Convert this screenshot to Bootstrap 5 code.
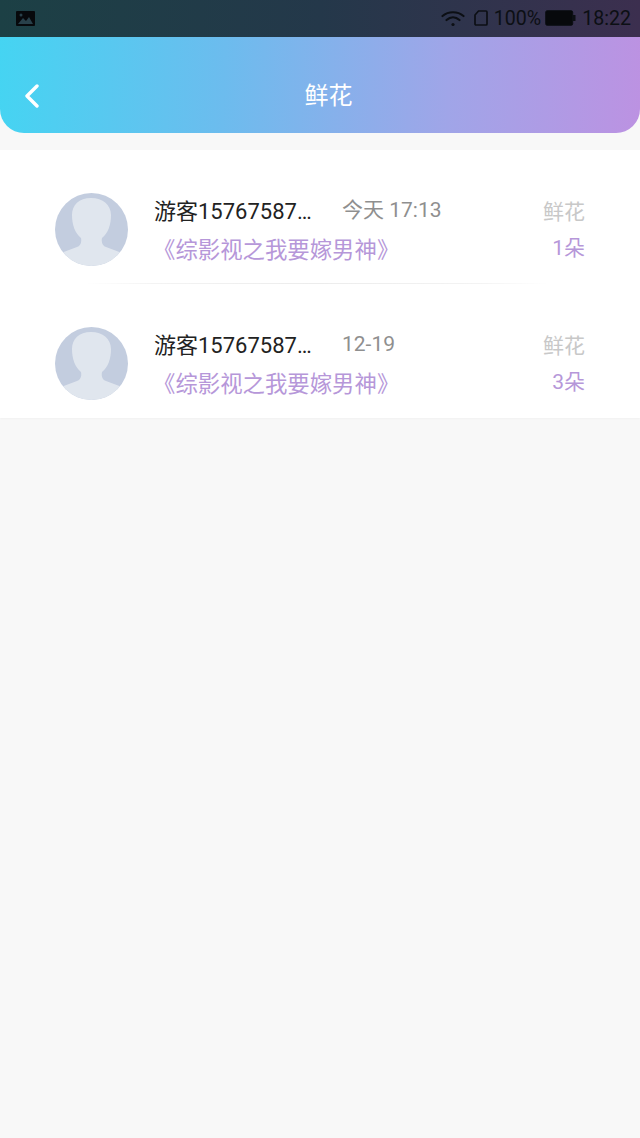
<!DOCTYPE html>
<html lang="zh">
<head>
  <meta charset="UTF-8" />
  <meta name="viewport" content="width=device-width, initial-scale=1.0">
  <title>鲜花</title>
  <link href="https://cdn.jsdelivr.net/npm/bootstrap@5.3.3/dist/css/bootstrap.min.css" rel="stylesheet">
  <script src="https://cdn.jsdelivr.net/npm/bootstrap@5.3.3/dist/js/bootstrap.bundle.min.js"></script>
  <style>
    html, body { height: 100%; }
    body { background: #f8f8f8; font-family: Roboto, "Noto Sans CJK SC", sans-serif; }
    .status-strip { height: 37px; padding: 0 9px 0 16px; background: linear-gradient(90deg, #1c4045 0%, #24384a 50%, #3c2f4f 100%); color: #0c0f14; font-size: 19.6px; }
    .sim-icon { margin-left: 9px; }
    .batt-pct, .clock-text { margin-left: 6px; }
    .batt-icon { margin-left: 4px; }
    .head-bar { height: 96px; padding: 22px 0 0 24px; color: #fff; border-radius: 0 0 24px 24px; background: linear-gradient(92deg, #45d4f2 0%, #6cbcee 35%, #a0a5e8 70%, #bc92e2 100%); }
    .head-title { left: 0; right: 0; top: 22px; bottom: 0; font-size: 24px; padding-left: 17px; }
    .flower-list { margin-top: 17px; background: #fff; box-shadow: 0 1px 2px rgba(0,0,0,.03); }
    .flower-row { height: 134px; padding: 24px 55px 0 55px; }
    .row-rule { left: 85px; right: 92px; bottom: 0; height: 1px; background: linear-gradient(90deg, #fff, #f3f3f3 15%, #ececec 50%, #f3f3f3 85%, #fff); }
    .avatar-disc { width: 73px; height: 73px; border-radius: 50%; overflow: hidden; flex: none; }
    .name-col { margin: 5px 0 0 26px; width: 386px; }
    .top-line { height: 38px; padding-bottom: 3px; }
    .visitor-name { width: 188px; font-size: 22px; color: #222; white-space: nowrap; }
    .visit-time { font-size: 21px; color: #8f8f8f; }
    .book-title { height: 38px; font-size: 22.4px; color: #b697d9; margin-left: -1px; white-space: nowrap; }
    .right-col { margin-top: 4px; text-align: right; }
    .flower-label { height: 36px; font-size: 21px; color: #c8c8c8; }
    .flower-count { height: 36px; font-size: 21px; color: #b697d9; }
  </style>
</head>
<body>
  <div class="status-strip d-flex align-items-center">
    <svg width="19" height="15" viewBox="0 0 19 15"><rect width="19" height="15" rx="1" fill="#07090c"/><path d="M2 13 7 7l3 3 3-4 4 7z" fill="#28404a"/><circle cx="5" cy="4" r="1.5" fill="#28404a"/></svg>
    <div class="ms-auto d-flex align-items-center">
      <svg width="24" height="17" viewBox="0 0 24 17" fill="none" stroke="#0c0f14" stroke-width="2.2" stroke-linecap="round"><path d="M1.5 6C7.5 1 16.5 1 22.5 6"/><path d="M5.5 10C9.5 6.5 14.5 6.5 18.5 10"/><circle cx="12" cy="14.5" r="1.6" fill="#0c0f14" stroke="none"/></svg>
      <svg class="sim-icon" width="14" height="16" viewBox="0 0 14 16" fill="none" stroke="#0c0f14" stroke-width="1.7"><path d="M4.5 1H12a1 1 0 0 1 1 1v12a1 1 0 0 1-1 1H2a1 1 0 0 1-1-1V5z"/></svg>
      <span class="batt-pct">100%</span>
      <svg class="batt-icon" width="31" height="16" viewBox="0 0 31 16"><rect x=".7" y=".7" width="27" height="14.6" rx="1.5" fill="#07090c" stroke="#0c0f14"/><rect x="28" y="5" width="2.5" height="6" fill="#0c0f14"/></svg>
      <span class="clock-text">18:22</span>
    </div>
  </div>

  <div class="head-bar d-flex align-items-center position-relative">
    <svg width="17" height="24" viewBox="0 0 17 24" fill="none" stroke="#fff" stroke-width="3.4" stroke-linecap="round" stroke-linejoin="round"><path d="M13 2 3 12l10 10"/></svg>
    <div class="head-title position-absolute d-flex align-items-center justify-content-center">鲜花</div>
  </div>

  <div class="flower-list">
    <div class="flower-row d-flex align-items-center position-relative">
      <svg class="avatar-disc" viewBox="0 0 73 73"><rect width="73" height="73" fill="#c3cddf"/><path d="M36 5c-12 0-19 7-19 17 0 10 3 18 9 23 1 5-1 8-4 9L6 60c7 8 18 13 30 13s24-5 31-13l-16-6c-3-1-5-4-4-9 6-5 9-13 9-23C56 12 48 5 36 5z" fill="#e0e6ee"/></svg>
      <div class="name-col">
        <div class="top-line d-flex align-items-center"><span class="visitor-name">游客15767587…</span><span class="visit-time">今天 17:13</span></div>
        <div class="book-title d-flex align-items-center">《综影视之我要嫁男神》</div>
      </div>
      <div class="right-col flex-grow-1">
        <div class="flower-label d-flex align-items-center justify-content-end">鲜花</div>
        <div class="flower-count d-flex align-items-center justify-content-end">1朵</div>
      </div>
      <div class="row-rule position-absolute"></div>
    </div>
    <div class="flower-row d-flex align-items-center position-relative">
      <svg class="avatar-disc" viewBox="0 0 73 73"><rect width="73" height="73" fill="#c3cddf"/><path d="M36 5c-12 0-19 7-19 17 0 10 3 18 9 23 1 5-1 8-4 9L6 60c7 8 18 13 30 13s24-5 31-13l-16-6c-3-1-5-4-4-9 6-5 9-13 9-23C56 12 48 5 36 5z" fill="#e0e6ee"/></svg>
      <div class="name-col">
        <div class="top-line d-flex align-items-center"><span class="visitor-name">游客15767587…</span><span class="visit-time">12-19</span></div>
        <div class="book-title d-flex align-items-center">《综影视之我要嫁男神》</div>
      </div>
      <div class="right-col flex-grow-1">
        <div class="flower-label d-flex align-items-center justify-content-end">鲜花</div>
        <div class="flower-count d-flex align-items-center justify-content-end">3朵</div>
      </div>
    </div>
  </div>
</body>
</html>
